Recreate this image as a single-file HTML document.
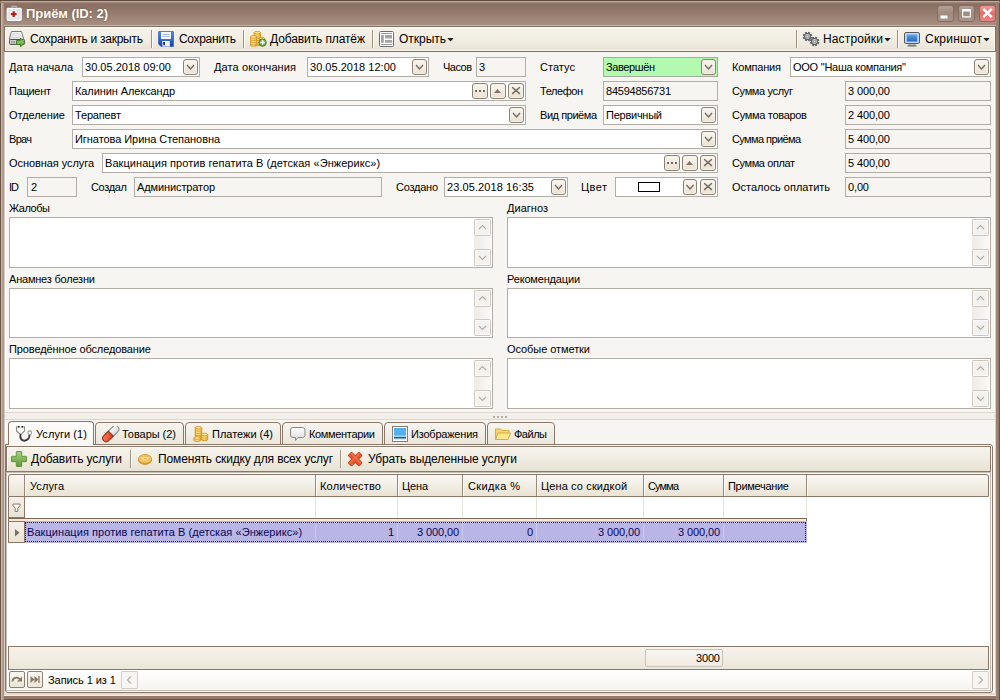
<!DOCTYPE html>
<html lang="ru"><head>
<meta charset="utf-8">
<title>Приём (ID: 2)</title>
<style>
*{box-sizing:border-box;margin:0;padding:0}
html,body{width:1000px;height:700px;overflow:hidden}
body{position:relative;background:#5e473b;font-family:"Liberation Sans",sans-serif;font-size:11px;color:#000}
.abs,.t,.in,.ro,.b,.ta,.sb,.tab,.ico,.sep,.hc,.vl{position:absolute}
/* window frame */
#frame{left:0;top:0;width:1000px;height:700px;background:#9a8171;border-radius:4px 4px 0 0}
#titlebar{left:0;top:0;width:1000px;height:25px;border-radius:4px 4px 0 0;background:linear-gradient(#5e473b 0,#5e473b 1px,#bfab9e 1px,#bfab9e 2px,#9b8476 2px,#998274 3px,#886e60 4px,#a68e80 100%)}
#titleline{left:2px;top:25px;width:996px;height:1px;background:#c8b4a8}
#lb{left:0;top:3px;width:4px;height:697px;background:linear-gradient(90deg,#6a5444 0,#6a5444 1px,#c8b4a8 1px,#c8b4a8 2px,#b89f92 2px,#b89f92 3px,#a6948a 3px,#a6948a 4px)}
#lb4{left:4px;top:52px;width:1px;height:641px;background:#d8d0c8}
#rb{left:996px;top:3px;width:4px;height:697px;background:linear-gradient(90deg,#9c8474 0,#9c8474 1px,#9a8070 1px,#9a8070 2px,#957a6c 2px,#957a6c 3px,#6e5248 3px,#6e5248 4px)}
#rb4{left:995px;top:52px;width:1px;height:641px;background:#d8cfc6}
#bb{left:0;top:693px;width:1000px;height:7px;background:linear-gradient(#e4dad0 0,#e4dad0 2px,#f8eee4 2px,#f8eee4 3px,#95796a 3px,#94786a 6px,#6a5044 6px,#6a5044 7px)}
#inner{left:5px;top:27px;width:990px;height:666px;background:#fffdf8}
#content{left:6px;top:52px;width:988px;height:641px;background:#f7f5f1}
.title{left:26px;top:6px;font-size:13px;font-weight:bold;color:#fffdf6;line-height:16px;white-space:nowrap;text-shadow:0 0 2px #6b5347}
.wb{position:absolute;top:5px;width:17px;height:17px;border:1px solid #846d60;border-radius:3px;background:linear-gradient(#b3a096,#a08b7f 50%,#a8948a)}
.wb.close{background:linear-gradient(#f09a98,#e06e6c 50%,#e88684);border-color:#a4605c}
/* toolbar */
.tb{left:4px;width:992px;border:1px solid #807064;box-shadow:inset 1px 1px 0 #fffdf8,inset -1px -1px 0 #fbf6ee;background:linear-gradient(#f6f3ec 0,#f2eee4 50%,#e9e3d4 100%)}
.t{white-space:nowrap;line-height:14px;height:14px}
.t12{font-size:12px}
.sep{width:1px;background:#a29284;box-shadow:1px 0 0 #fbfaf7}
/* inputs */
.in{height:20px;background:#fff;border:1px solid #b3ada7}
.ro{height:20px;background:#f7f5f1;border:1px solid #b3ada7}
.b{width:16px;height:16px;border:1px solid #8f8074;border-radius:3px;background:linear-gradient(#f8f5ee,#f1ece2 50%,#e9e3d5);box-shadow:inset 0 0 0 1px #f5f2ea}
.b svg{position:absolute;left:0;top:0}
.ta{background:#fff;border:1px solid #b3ada7}
.sb{width:17px;height:17px;border:1px solid #cdc7c0;background:#f4f2ee;border-radius:1.500px;box-shadow:inset 0 0 0 1px #faf9f7}
</style>
</head>
<body>
<div id="frame" class="abs"></div>
<div id="bb" class="abs"></div>
<div id="titlebar" class="abs"></div>
<div id="titleline" class="abs"></div>
<div id="inner" class="abs"></div>
<div id="content" class="abs"></div>
<div id="lb" class="abs"></div>
<div id="rb" class="abs"></div>
<div id="lb4" class="abs"></div>
<div id="rb4" class="abs"></div>

<!-- TITLE -->
<div class="abs title" style="letter-spacing: -0.05px;">Приём (ID: 2)</div>
<svg width="0" height="0" style="position:absolute"><defs><linearGradient id="gGold" x1="0" y1="0" x2="1" y2="0"><stop offset="0" stop-color="#f3c24c"></stop><stop offset=".45" stop-color="#ffe98c"></stop><stop offset="1" stop-color="#eeb640"></stop></linearGradient><linearGradient id="gGreen" x1="0" y1="0" x2="0" y2="1"><stop offset="0" stop-color="#a6d37c"></stop><stop offset="1" stop-color="#5d9a36"></stop></linearGradient><linearGradient id="gBlue" x1="0" y1="0" x2="0" y2="1"><stop offset="0" stop-color="#4a8be0"></stop><stop offset="1" stop-color="#1f3fb0"></stop></linearGradient><linearGradient id="gScr" x1="0" y1="0" x2="0" y2="1"><stop offset="0" stop-color="#5fa6ea"></stop><stop offset="1" stop-color="#2a62b8"></stop></linearGradient><linearGradient id="gRed" x1="0" y1="0" x2="1" y2="1"><stop offset="0" stop-color="#f88a5c"></stop><stop offset="1" stop-color="#d83a1c"></stop></linearGradient><linearGradient id="gGray" x1="0" y1="0" x2="0" y2="1"><stop offset="0" stop-color="#ffffff"></stop><stop offset="1" stop-color="#d8d8d8"></stop></linearGradient><radialGradient id="gPlus" cx=".5" cy=".4" r=".6"><stop offset="0" stop-color="#a4e070"></stop><stop offset="1" stop-color="#4a9a1c"></stop></radialGradient></defs></svg>
<svg class="ico" style="left:6px;top:5px" width="16" height="17" viewBox="0 0 16 17"><path d="M5.800 2.800v-1.500h4.700v1.500" fill="none" stroke="#b8b0aa" stroke-width="1.200"></path><rect x=".6" y="2.800" width="15.200" height="13.400" rx="1.200" fill="#6e5a4e" opacity=".55"></rect><rect x="1.200" y="3.400" width="14" height="12" rx=".8" fill="#e2e4e9" stroke="#fbfbfb" stroke-width="1.200"></rect><circle cx="7.700" cy="9.200" r="4" fill="#fff"></circle><path d="M7.700 6.300v5.800M4.800 9.200h5.800" stroke="#c81414" stroke-width="2.300"></path></svg>

<div class="wb" style="left:937px"><svg width="15" height="15" viewBox="0 0 15 15"><rect x="2.500" y="9.500" width="7" height="3" fill="#fff"></rect></svg></div>
<div class="wb" style="left:958px"><svg width="15" height="15" viewBox="0 0 15 15"><path d="M3 3h9v8.500h-9z M4.200 5.500h6.600v4.800h-6.600z" fill="#fff" fill-rule="evenodd"></path></svg></div>
<div class="wb close" style="left:979px"><svg width="15" height="15" viewBox="0 0 15 15"><path d="M3.300 2.800l8.400 8.400M11.700 2.800l-8.400 8.400" stroke="#fff" stroke-width="2.500" stroke-linecap="butt"></path></svg></div>

<!-- TOOLBAR 1 -->
<div class="abs tb" style="top:26px;height:26px"></div>
<svg class="ico" style="left:9px;top:31px" width="17" height="17" viewBox="0 0 17 17"><path d="M2.500 .5h10l2.500 8.500h-15z" fill="url(#gGray)" stroke="#7a7a7a"></path><ellipse cx="7.500" cy="4.500" rx="4" ry="2.200" fill="#ececec" stroke="#d2d2d2" stroke-width=".8"></ellipse><rect x=".5" y="8.500" width="15" height="5" rx="1" fill="#cfcfcf" stroke="#555"></rect><path d="M2.500 10v2.500M4 10v2.500M5.500 10v2.500" stroke="#8a8a8a" stroke-width=".8"></path><path d="M7.500 9.500h4v-2.500l4.300 4.500l-4.300 4.500v-2.500h-4z" fill="url(#gGreen)" stroke="#3f7a1f" stroke-width=".9" stroke-linejoin="round"></path></svg>
<div class="t t12" style="left: 30px; top: 32px; letter-spacing: -0.25px;">Сохранить и закрыть</div>
<div class="sep" style="left:151px;top:30px;height:18px"></div>
<svg class="ico" style="left:158px;top:31px" width="16" height="16" viewBox="0 0 16 16"><path d="M1 .5h14a.5 .5 0 0 1 .5 .5v14.500h-12.500l-2.500 -2.500v-12a.5 .5 0 0 1 .5 -.5z" fill="url(#gBlue)" stroke="#2a50b8" stroke-width=".6"></path><rect x="3" y="1" width="10" height="7" fill="#f4fbff"></rect><path d="M4.500 3.500h7M4.500 5.500h7" stroke="#9ab0e0" stroke-width=".8"></path><rect x="3" y="8.200" width="10" height="1.300" fill="#3a8ad0" opacity=".7"></rect><rect x="4.300" y="10" width="7.500" height="5.500" fill="#f4f6fa"></rect><rect x="5.200" y="11" width="1.800" height="3.200" fill="#1c2c50"></rect></svg>
<div class="t t12" style="left: 179px; top: 32px; letter-spacing: -0.33px;">Сохранить</div>
<div class="sep" style="left:243px;top:30px;height:18px"></div>
<svg class="ico" style="left:250px;top:31px" width="17" height="17" viewBox="0 0 17 17"><path d="M4.0 1.7v11.8a3.3 1.3 0 0 0 6.6 0v-11.8z" fill="url(#gGold)" stroke="#cd8a22" stroke-width=".8"></path><path d="M4.0 3.9000000000000004a3.3 1.3 0 0 0 6.6 0" fill="none" stroke="#d08e26" stroke-width=".7"></path><path d="M4.0 6.1000000000000005a3.3 1.3 0 0 0 6.6 0" fill="none" stroke="#d08e26" stroke-width=".7"></path><path d="M4.0 8.3a3.3 1.3 0 0 0 6.6 0" fill="none" stroke="#d08e26" stroke-width=".7"></path><path d="M4.0 10.5a3.3 1.3 0 0 0 6.6 0" fill="none" stroke="#d08e26" stroke-width=".7"></path><path d="M4.0 12.7a3.3 1.3 0 0 0 6.6 0" fill="none" stroke="#d08e26" stroke-width=".7"></path><ellipse cx="7.3" cy="1.7" rx="3.3" ry="1.3" fill="#ffea8c" stroke="#cd8a22" stroke-width=".8"></ellipse><path d="M9.4 7.5v3.5a2.6 1.3 0 0 0 5.2 0v-3.5z" fill="url(#gGold)" stroke="#cd8a22" stroke-width=".8"></path><path d="M9.4 9.7a2.6 1.3 0 0 0 5.2 0" fill="none" stroke="#d08e26" stroke-width=".7"></path><ellipse cx="12" cy="7.5" rx="2.6" ry="1.3" fill="#ffea8c" stroke="#cd8a22" stroke-width=".8"></ellipse><path d="M0.20000000000000018 6v8a3.3 1.3 0 0 0 6.6 0v-8z" fill="url(#gGold)" stroke="#cd8a22" stroke-width=".8"></path><path d="M0.20000000000000018 8.2a3.3 1.3 0 0 0 6.6 0" fill="none" stroke="#d08e26" stroke-width=".7"></path><path d="M0.20000000000000018 10.399999999999999a3.3 1.3 0 0 0 6.6 0" fill="none" stroke="#d08e26" stroke-width=".7"></path><path d="M0.20000000000000018 12.599999999999998a3.3 1.3 0 0 0 6.6 0" fill="none" stroke="#d08e26" stroke-width=".7"></path><ellipse cx="3.5" cy="6" rx="3.3" ry="1.3" fill="#ffea8c" stroke="#cd8a22" stroke-width=".8"></ellipse><circle cx="12.600" cy="11.600" r="3.700" fill="url(#gPlus)" stroke="#3d8a14" stroke-width=".9"></circle><path d="M12.600 9.300v4.600M10.300 11.600h4.600" stroke="#fff" stroke-width="1.300"></path></svg>
<div class="t t12" style="left: 270px; top: 32px; letter-spacing: -0.11px;">Добавить платёж</div>
<div class="sep" style="left:372px;top:30px;height:18px"></div>
<svg class="ico" style="left:379px;top:31px" width="15" height="16" viewBox="0 0 15 16"><rect x=".5" y=".5" width="14" height="15" rx="1" fill="#fff" stroke="#6c6c6c"></rect><path d="M2 2.500h11M2 13.500h11" stroke="#9a9a9a"></path><rect x="2" y="4" width="2.800" height="7.800" fill="#a4a4a4"></rect><rect x="6" y="4" width="7" height="3.500" fill="#a4a4a4"></rect><rect x="6" y="9" width="7" height="2.800" fill="#a4a4a4"></rect></svg>
<div class="t t12" style="left: 399px; top: 32px; letter-spacing: -0.02px;">Открыть</div>
<svg class="ico" style="left:447px;top:38px" width="7" height="4" viewBox="0 0 7 4"><path d="M.3 0h6.400l-3.200 3.400z" fill="#1a1a1a"></path></svg>
<div class="sep" style="left:796px;top:30px;height:18px"></div>
<svg class="ico" style="left:802px;top:31px" width="18" height="17" viewBox="0 0 18 17"><rect x="4.45" y="0.80" width="2.100" height="2.400" fill="#636363" transform="rotate(22.5 5.5 5.5)"></rect><rect x="4.45" y="0.80" width="2.100" height="2.400" fill="#636363" transform="rotate(67.5 5.5 5.5)"></rect><rect x="4.45" y="0.80" width="2.100" height="2.400" fill="#636363" transform="rotate(112.5 5.5 5.5)"></rect><rect x="4.45" y="0.80" width="2.100" height="2.400" fill="#636363" transform="rotate(157.5 5.5 5.5)"></rect><rect x="4.45" y="0.80" width="2.100" height="2.400" fill="#636363" transform="rotate(202.5 5.5 5.5)"></rect><rect x="4.45" y="0.80" width="2.100" height="2.400" fill="#636363" transform="rotate(247.5 5.5 5.5)"></rect><rect x="4.45" y="0.80" width="2.100" height="2.400" fill="#636363" transform="rotate(292.5 5.5 5.5)"></rect><rect x="4.45" y="0.80" width="2.100" height="2.400" fill="#636363" transform="rotate(337.5 5.5 5.5)"></rect><circle cx="5.5" cy="5.5" r="3.500" fill="#636363"></circle><circle cx="5.5" cy="5.5" r="2.400" fill="#dadae2"></circle><circle cx="5.5" cy="5.5" r="1.300" fill="none" stroke="#7a7a86" stroke-width=".8"></circle><rect x="11.55" y="5.80" width="2.100" height="2.400" fill="#636363" transform="rotate(22.5 12.6 10.5)"></rect><rect x="11.55" y="5.80" width="2.100" height="2.400" fill="#636363" transform="rotate(67.5 12.6 10.5)"></rect><rect x="11.55" y="5.80" width="2.100" height="2.400" fill="#636363" transform="rotate(112.5 12.6 10.5)"></rect><rect x="11.55" y="5.80" width="2.100" height="2.400" fill="#636363" transform="rotate(157.5 12.6 10.5)"></rect><rect x="11.55" y="5.80" width="2.100" height="2.400" fill="#636363" transform="rotate(202.5 12.6 10.5)"></rect><rect x="11.55" y="5.80" width="2.100" height="2.400" fill="#636363" transform="rotate(247.5 12.6 10.5)"></rect><rect x="11.55" y="5.80" width="2.100" height="2.400" fill="#636363" transform="rotate(292.5 12.6 10.5)"></rect><rect x="11.55" y="5.80" width="2.100" height="2.400" fill="#636363" transform="rotate(337.5 12.6 10.5)"></rect><circle cx="12.6" cy="10.5" r="3.500" fill="#636363"></circle><circle cx="12.6" cy="10.5" r="2.400" fill="#dadae2"></circle><circle cx="12.6" cy="10.5" r="1.300" fill="none" stroke="#7a7a86" stroke-width=".8"></circle></svg>
<div class="t t12" style="left: 823px; top: 32px; letter-spacing: 0.14px;">Настройки</div>
<svg class="ico" style="left:884px;top:38px" width="7" height="4" viewBox="0 0 7 4"><path d="M.3 0h6.400l-3.200 3.400z" fill="#1a1a1a"></path></svg>
<div class="sep" style="left:897px;top:30px;height:18px"></div>
<svg class="ico" style="left:904px;top:32px" width="16" height="15" viewBox="0 0 16 15"><rect x=".5" y=".5" width="15" height="11" rx="1.500" fill="#b9d8ff" stroke="#5a5a5a"></rect><rect x="2.800" y="2.500" width="10.400" height="7" fill="url(#gScr)"></rect><path d="M5.500 12h5l1 1.500h-7z" fill="#e0e0e0" stroke="#6a6a6a" stroke-width=".6"></path><rect x="3.500" y="13.200" width="9" height="1.300" rx=".5" fill="#707070"></rect></svg>
<div class="t t12" style="left: 925px; top: 32px; letter-spacing: 0.22px;">Скриншот</div>
<svg class="ico" style="left:983px;top:38px" width="7" height="4" viewBox="0 0 7 4"><path d="M.3 0h6.400l-3.200 3.400z" fill="#1a1a1a"></path></svg>


<!-- FORM -->
<div class="t" style="left: 9px; top: 60px; letter-spacing: 0.03px;">Дата начала</div>
<div class="in" style="left:82px;top:57px;width:118px;"></div>
<div class="t" style="left: 85px; top: 60px; letter-spacing: 0.02px;">30.05.2018 09:00</div>
<div class="b" style="left:183px;top:59px;width:15px;"><svg width="13" height="14" viewBox="0 0 13 14"><path d="M3 5l3.500 4l3.500 -4" fill="none" stroke="#75655a" stroke-width="1.250"></path></svg></div>
<div class="t" style="left: 214px; top: 60px; letter-spacing: 0.1px;">Дата окончания</div>
<div class="in" style="left:307px;top:57px;width:122px;"></div>
<div class="t" style="left: 310px; top: 60px; letter-spacing: 0.02px;">30.05.2018 12:00</div>
<div class="b" style="left:412px;top:59px;width:15px;"><svg width="13" height="14" viewBox="0 0 13 14"><path d="M3 5l3.500 4l3.500 -4" fill="none" stroke="#75655a" stroke-width="1.250"></path></svg></div>
<div class="t" style="left: 443px; top: 60px; letter-spacing: -0.51px;">Часов</div>
<div class="ro" style="left:476px;top:57px;width:50px;"></div>
<div class="t" style="left:479px;top:60px;">3</div>
<div class="t" style="left: 540px; top: 60px; letter-spacing: 0.04px;">Статус</div>
<div class="in" style="left:603px;top:57px;width:115px;background:#b3fab0;border-color:#a3ad9c;"></div>
<div class="t" style="left: 606px; top: 60px; letter-spacing: -0.39px;">Завершён</div>
<div class="b" style="left:701px;top:59px;width:15px;"><svg width="13" height="14" viewBox="0 0 13 14"><path d="M3 5l3.500 4l3.500 -4" fill="none" stroke="#75655a" stroke-width="1.250"></path></svg></div>
<div class="t" style="left: 732px; top: 60px; letter-spacing: -0.19px;">Компания</div>
<div class="in" style="left:790px;top:57px;width:201px;"></div>
<div class="t" style="left: 793px; top: 60px; letter-spacing: -0.25px;">ООО "Наша компания"</div>
<div class="b" style="left:974px;top:59px;width:15px;"><svg width="13" height="14" viewBox="0 0 13 14"><path d="M3 5l3.500 4l3.500 -4" fill="none" stroke="#75655a" stroke-width="1.250"></path></svg></div>
<div class="t" style="left: 9px; top: 84px; letter-spacing: -0.28px;">Пациент</div>
<div class="in" style="left:72px;top:81px;width:454px;"></div>
<div class="t" style="left: 75px; top: 84px; letter-spacing: -0.09px;">Калинин Александр</div>
<div class="b" style="left:472px;top:83px;"><svg width="14" height="14" viewBox="0 0 14 14"><path d="M2 7h2M6 7h2M10 7h2" stroke="#75655a" stroke-width="2"></path></svg></div>
<div class="b" style="left:490px;top:83px;"><svg width="14" height="14" viewBox="0 0 14 14"><path d="M3 9l3.500 -4l3.500 4z" fill="#8a7468"></path></svg></div>
<div class="b" style="left:508px;top:83px;"><svg width="14" height="14" viewBox="0 0 14 14"><path d="M3.200 3.300l7.600 6.600M10.800 3.300l-7.600 6.600" stroke="#75655a" stroke-width="1.400"></path></svg></div>
<div class="t" style="left: 540px; top: 84px; letter-spacing: -0.44px;">Телефон</div>
<div class="ro" style="left:603px;top:81px;width:115px;"></div>
<div class="t" style="left: 606px; top: 84px; letter-spacing: -0.23px;">84594856731</div>
<div class="t" style="left: 732px; top: 84px; letter-spacing: -0.34px;">Сумма услуг</div>
<div class="ro" style="left:845px;top:81px;width:146px;"></div>
<div class="t" style="left: 848px; top: 84px; letter-spacing: -0.12px;">3 000,00</div>
<div class="t" style="left: 9px; top: 108px; letter-spacing: -0.04px;">Отделение</div>
<div class="in" style="left:72px;top:105px;width:454px;"></div>
<div class="t" style="left: 75px; top: 108px; letter-spacing: -0.17px;">Терапевт</div>
<div class="b" style="left:509px;top:107px;width:15px;"><svg width="13" height="14" viewBox="0 0 13 14"><path d="M3 5l3.500 4l3.500 -4" fill="none" stroke="#75655a" stroke-width="1.250"></path></svg></div>
<div class="t" style="left: 540px; top: 108px; letter-spacing: -0.44px;">Вид приёма</div>
<div class="in" style="left:603px;top:105px;width:115px;"></div>
<div class="t" style="left: 606px; top: 108px; letter-spacing: -0.25px;">Первичный</div>
<div class="b" style="left:701px;top:107px;width:15px;"><svg width="13" height="14" viewBox="0 0 13 14"><path d="M3 5l3.500 4l3.500 -4" fill="none" stroke="#75655a" stroke-width="1.250"></path></svg></div>
<div class="t" style="left: 732px; top: 108px; letter-spacing: -0.3px;">Сумма товаров</div>
<div class="ro" style="left:845px;top:105px;width:146px;"></div>
<div class="t" style="left: 848px; top: 108px; letter-spacing: -0.12px;">2 400,00</div>
<div class="t" style="left: 9px; top: 132px; letter-spacing: -0.69px;">Врач</div>
<div class="in" style="left:72px;top:129px;width:646px;"></div>
<div class="t" style="left: 75px; top: 132px; letter-spacing: -0.06px;">Игнатова Ирина Степановна</div>
<div class="b" style="left:701px;top:131px;width:15px;"><svg width="13" height="14" viewBox="0 0 13 14"><path d="M3 5l3.500 4l3.500 -4" fill="none" stroke="#75655a" stroke-width="1.250"></path></svg></div>
<div class="t" style="left: 732px; top: 132px; letter-spacing: -0.6px;">Сумма приёма</div>
<div class="ro" style="left:845px;top:129px;width:146px;"></div>
<div class="t" style="left: 848px; top: 132px; letter-spacing: -0.12px;">5 400,00</div>
<div class="t" style="left: 9px; top: 156px; letter-spacing: -0.07px;">Основная услуга</div>
<div class="in" style="left:102px;top:153px;width:616px;"></div>
<div class="t" style="left: 105px; top: 156px; letter-spacing: 0.06px;">Вакцинация против гепатита В (детская «Энжерикс»)</div>
<div class="b" style="left:664px;top:155px;"><svg width="14" height="14" viewBox="0 0 14 14"><path d="M2 7h2M6 7h2M10 7h2" stroke="#75655a" stroke-width="2"></path></svg></div>
<div class="b" style="left:682px;top:155px;"><svg width="14" height="14" viewBox="0 0 14 14"><path d="M3 9l3.500 -4l3.500 4z" fill="#8a7468"></path></svg></div>
<div class="b" style="left:700px;top:155px;"><svg width="14" height="14" viewBox="0 0 14 14"><path d="M3.200 3.300l7.600 6.600M10.800 3.300l-7.600 6.600" stroke="#75655a" stroke-width="1.400"></path></svg></div>
<div class="t" style="left: 732px; top: 156px; letter-spacing: -0.4px;">Сумма оплат</div>
<div class="ro" style="left:845px;top:153px;width:146px;"></div>
<div class="t" style="left: 848px; top: 156px; letter-spacing: -0.12px;">5 400,00</div>
<div class="t" style="left: 9px; top: 180px; letter-spacing: -1px;">ID</div>
<div class="ro" style="left:27px;top:177px;width:50px;"></div>
<div class="t" style="left:31px;top:180px;">2</div>
<div class="t" style="left: 91px; top: 180px; letter-spacing: -0.34px;">Создал</div>
<div class="ro" style="left:134px;top:177px;width:248px;"></div>
<div class="t" style="left: 137px; top: 180px; letter-spacing: -0.11px;">Администратор</div>
<div class="t" style="left: 396px; top: 180px; letter-spacing: -0.24px;">Создано</div>
<div class="in" style="left:444px;top:177px;width:124px;"></div>
<div class="t" style="left: 447px; top: 180px; letter-spacing: 0.09px;">23.05.2018 16:35</div>
<div class="b" style="left:551px;top:179px;width:15px;"><svg width="13" height="14" viewBox="0 0 13 14"><path d="M3 5l3.500 4l3.500 -4" fill="none" stroke="#75655a" stroke-width="1.250"></path></svg></div>
<div class="t" style="left: 581px; top: 180px; letter-spacing: 0.45px;">Цвет</div>
<div class="in" style="left:615px;top:177px;width:103px;"></div>
<div class="abs" style="left:638px;top:182px;width:22px;height:10px;border:1px solid #000;background:#fff"></div>
<div class="b" style="left:683px;top:179px;width:14px;"><svg width="12" height="14" viewBox="0 0 12 14"><path d="M2.500 5l3.500 4l3.500 -4" fill="none" stroke="#75655a" stroke-width="1.250"></path></svg></div>
<div class="b" style="left:700px;top:179px;"><svg width="14" height="14" viewBox="0 0 14 14"><path d="M3.200 3.300l7.600 6.600M10.800 3.300l-7.600 6.600" stroke="#75655a" stroke-width="1.400"></path></svg></div>
<div class="t" style="left: 732px; top: 180px; letter-spacing: -0.02px;">Осталось оплатить</div>
<div class="ro" style="left:845px;top:177px;width:146px;"></div>
<div class="t" style="left: 848px; top: 180px; letter-spacing: -0.14px;">0,00</div>


<!-- TEXTAREAS -->
<div class="t" style="left: 9px; top: 201px; letter-spacing: -0.45px;">Жалобы</div>
<div class="ta" style="left:9px;top:217px;width:484px;height:51px"></div>
<div class="abs" style="left:474px;top:219px;width:17px;height:47px;background:linear-gradient(90deg,#eeebe6,#faf9f7)"></div>
<div class="sb" style="left:474px;top:219px"><svg width="15" height="15" viewBox="0 0 15 15"><path d="M4 9l3.500 -3.500l3.500 3.500" fill="none" stroke="#b4aca4" stroke-width="1.100"></path></svg></div>
<div class="sb" style="left:474px;top:249px"><svg width="15" height="15" viewBox="0 0 15 15"><path d="M4 6l3.500 3.500l3.500 -3.500" fill="none" stroke="#b4aca4" stroke-width="1.100"></path></svg></div>
<div class="t" style="left: 507px; top: 201px; letter-spacing: 0.03px;">Диагноз</div>
<div class="ta" style="left:507px;top:217px;width:484px;height:51px"></div>
<div class="abs" style="left:972px;top:219px;width:17px;height:47px;background:linear-gradient(90deg,#eeebe6,#faf9f7)"></div>
<div class="sb" style="left:972px;top:219px"><svg width="15" height="15" viewBox="0 0 15 15"><path d="M4 9l3.500 -3.500l3.500 3.500" fill="none" stroke="#b4aca4" stroke-width="1.100"></path></svg></div>
<div class="sb" style="left:972px;top:249px"><svg width="15" height="15" viewBox="0 0 15 15"><path d="M4 6l3.500 3.500l3.500 -3.500" fill="none" stroke="#b4aca4" stroke-width="1.100"></path></svg></div>
<div class="t" style="left: 9px; top: 272px; letter-spacing: -0.21px;">Анамнез болезни</div>
<div class="ta" style="left:9px;top:288px;width:484px;height:50px"></div>
<div class="abs" style="left:474px;top:290px;width:17px;height:46px;background:linear-gradient(90deg,#eeebe6,#faf9f7)"></div>
<div class="sb" style="left:474px;top:290px"><svg width="15" height="15" viewBox="0 0 15 15"><path d="M4 9l3.500 -3.500l3.500 3.500" fill="none" stroke="#b4aca4" stroke-width="1.100"></path></svg></div>
<div class="sb" style="left:474px;top:319px"><svg width="15" height="15" viewBox="0 0 15 15"><path d="M4 6l3.500 3.500l3.500 -3.500" fill="none" stroke="#b4aca4" stroke-width="1.100"></path></svg></div>
<div class="t" style="left: 507px; top: 272px; letter-spacing: -0.17px;">Рекомендации</div>
<div class="ta" style="left:507px;top:288px;width:484px;height:50px"></div>
<div class="abs" style="left:972px;top:290px;width:17px;height:46px;background:linear-gradient(90deg,#eeebe6,#faf9f7)"></div>
<div class="sb" style="left:972px;top:290px"><svg width="15" height="15" viewBox="0 0 15 15"><path d="M4 9l3.500 -3.500l3.500 3.500" fill="none" stroke="#b4aca4" stroke-width="1.100"></path></svg></div>
<div class="sb" style="left:972px;top:319px"><svg width="15" height="15" viewBox="0 0 15 15"><path d="M4 6l3.500 3.500l3.500 -3.500" fill="none" stroke="#b4aca4" stroke-width="1.100"></path></svg></div>
<div class="t" style="left: 9px; top: 342px; letter-spacing: -0.11px;">Проведённое обследование</div>
<div class="ta" style="left:9px;top:358px;width:484px;height:51px"></div>
<div class="abs" style="left:474px;top:360px;width:17px;height:47px;background:linear-gradient(90deg,#eeebe6,#faf9f7)"></div>
<div class="sb" style="left:474px;top:360px"><svg width="15" height="15" viewBox="0 0 15 15"><path d="M4 9l3.500 -3.500l3.500 3.500" fill="none" stroke="#b4aca4" stroke-width="1.100"></path></svg></div>
<div class="sb" style="left:474px;top:390px"><svg width="15" height="15" viewBox="0 0 15 15"><path d="M4 6l3.500 3.500l3.500 -3.500" fill="none" stroke="#b4aca4" stroke-width="1.100"></path></svg></div>
<div class="t" style="left: 507px; top: 342px; letter-spacing: -0.07px;">Особые отметки</div>
<div class="ta" style="left:507px;top:358px;width:484px;height:51px"></div>
<div class="abs" style="left:972px;top:360px;width:17px;height:47px;background:linear-gradient(90deg,#eeebe6,#faf9f7)"></div>
<div class="sb" style="left:972px;top:360px"><svg width="15" height="15" viewBox="0 0 15 15"><path d="M4 9l3.500 -3.500l3.500 3.500" fill="none" stroke="#b4aca4" stroke-width="1.100"></path></svg></div>
<div class="sb" style="left:972px;top:390px"><svg width="15" height="15" viewBox="0 0 15 15"><path d="M4 6l3.500 3.500l3.500 -3.500" fill="none" stroke="#b4aca4" stroke-width="1.100"></path></svg></div>


<!-- TABS -->
<div class="abs" style="left:5px;top:412px;width:990px;height:8px;background:#f3f0ea;border-top:1px solid #dcd6cf;border-bottom:1px solid #dcd6cf"></div>
<div class="abs" style="left:493px;top:416px;width:2px;height:2px;background:#b5aaa0"></div>
<div class="abs" style="left:497px;top:416px;width:2px;height:2px;background:#b5aaa0"></div>
<div class="abs" style="left:501px;top:416px;width:2px;height:2px;background:#b5aaa0"></div>
<div class="abs" style="left:505px;top:416px;width:2px;height:2px;background:#b5aaa0"></div>
<div class="abs" style="left:5px;top:444px;width:988px;height:249px;border:1px solid #8d7768;border-radius:0 3px 3px 3px;background:#fbfaf8"></div>
<div class="tab" style="left:8px;top:421px;width:86px;height:24px;border:1px solid #8d7768;border-bottom:none;border-radius:4px 4px 0 0;background:linear-gradient(#fdfcfa,#f8f7f4)"></div>
<div class="tab" style="left:95px;top:422px;width:89px;height:23px;border:1px solid #8d7768;border-radius:4px 4px 0 0;background:linear-gradient(#f7f5f0,#ebe6db)"></div>
<div class="tab" style="left:185px;top:422px;width:96px;height:23px;border:1px solid #8d7768;border-radius:4px 4px 0 0;background:linear-gradient(#f7f5f0,#ebe6db)"></div>
<div class="tab" style="left:282px;top:422px;width:101px;height:23px;border:1px solid #8d7768;border-radius:4px 4px 0 0;background:linear-gradient(#f7f5f0,#ebe6db)"></div>
<div class="tab" style="left:384px;top:422px;width:102px;height:23px;border:1px solid #8d7768;border-radius:4px 4px 0 0;background:linear-gradient(#f7f5f0,#ebe6db)"></div>
<div class="tab" style="left:487px;top:422px;width:68px;height:23px;border:1px solid #8d7768;border-radius:4px 4px 0 0;background:linear-gradient(#f7f5f0,#ebe6db)"></div>
<svg class="ico" style="left:15px;top:426px" width="17" height="16" viewBox="0 0 17 16"><path d="M3.300 .7h-1.800v4.300l3.900 3.200M8 .7h1.500v4.100l-3.300 3.400" fill="none" stroke="#8c8c8c" stroke-width="1.100" stroke-linejoin="round"></path><rect x="3.100" y="0" width="1.500" height="1.700" fill="#1c1c1c"></rect><rect x="6.500" y="0" width="1.500" height="1.700" fill="#1c1c1c"></rect><path d="M5.700 8c-1.300 3.800 .6 6.700 3.600 6.700c3.200 0 5.400 -2.700 5.300 -6.200" fill="none" stroke="#3a3a3a" stroke-width="1.900"></path><circle cx="14.800" cy="6.700" r="1.800" fill="#fff" stroke="#9a9a9a" stroke-width="1.100"></circle></svg>
<div class="t" style="left: 36px; top: 427px; letter-spacing: 0.07px;">Услуги (1)</div>
<svg class="ico" style="left:102px;top:426px" width="18" height="17" viewBox="0 0 18 17"><g transform="rotate(-45 8.800 7.700)"><path d="M8.800 4.200h6.500a3.500 3.500 0 0 1 0 7h-6.500z" fill="url(#gGray)" stroke="#888" stroke-width="1"></path><path d="M8.800 4.200h-6.500a3.500 3.500 0 0 0 0 7h6.500z" fill="url(#gRed)" stroke="#9e2014" stroke-width="1"></path></g></svg>
<div class="t" style="left: 122px; top: 427px; letter-spacing: -0.04px;">Товары (2)</div>
<svg class="ico" style="left:193px;top:426px" width="16" height="16" viewBox="0 0 16 16"><path d="M2.2 1.8v8.2a3.3 1.3 0 0 0 6.6 0v-8.2z" fill="url(#gGold)" stroke="#cd8a22" stroke-width=".8"></path><path d="M2.2 4.0a3.3 1.3 0 0 0 6.6 0" fill="none" stroke="#d08e26" stroke-width=".7"></path><path d="M2.2 6.2a3.3 1.3 0 0 0 6.6 0" fill="none" stroke="#d08e26" stroke-width=".7"></path><path d="M2.2 8.4a3.3 1.3 0 0 0 6.6 0" fill="none" stroke="#d08e26" stroke-width=".7"></path><ellipse cx="5.5" cy="1.8" rx="3.3" ry="1.3" fill="#ffea8c" stroke="#cd8a22" stroke-width=".8"></ellipse><path d="M8.3 8.5v5.0a3.2 1.3 0 0 0 6.4 0v-5.0z" fill="url(#gGold)" stroke="#cd8a22" stroke-width=".8"></path><path d="M8.3 10.7a3.2 1.3 0 0 0 6.4 0" fill="none" stroke="#d08e26" stroke-width=".7"></path><path d="M8.3 12.899999999999999a3.2 1.3 0 0 0 6.4 0" fill="none" stroke="#d08e26" stroke-width=".7"></path><ellipse cx="11.5" cy="8.5" rx="3.2" ry="1.3" fill="#ffea8c" stroke="#cd8a22" stroke-width=".8"></ellipse><path d="M0.9000000000000004 12v2.1999999999999993a3.3 1.3 0 0 0 6.6 0v-2.1999999999999993z" fill="url(#gGold)" stroke="#cd8a22" stroke-width=".8"></path><ellipse cx="4.2" cy="12" rx="3.3" ry="1.3" fill="#ffea8c" stroke="#cd8a22" stroke-width=".8"></ellipse></svg>
<div class="t" style="left: 212px; top: 427px; letter-spacing: -0.01px;">Платежи (4)</div>
<svg class="ico" style="left:290px;top:427px" width="16" height="15" viewBox="0 0 16 15"><path d="M3 .5h9.500a2.500 2.500 0 0 1 2.500 2.500v5a2.500 2.500 0 0 1 -2.500 2.500h-4.500l-2.500 3v-3h-2.500a2.500 2.500 0 0 1 -2.500 -2.500v-5a2.500 2.500 0 0 1 2.500 -2.500z" fill="url(#gGray)" stroke="#8e8780" stroke-width="1"></path></svg>
<div class="t" style="left: 309px; top: 427px; letter-spacing: -0.33px;">Комментарии</div>
<svg class="ico" style="left:392px;top:426px" width="16" height="16" viewBox="0 0 16 16"><rect x=".5" y=".5" width="15" height="15" fill="#fff" stroke="#8a7f78"></rect><rect x="2" y="2" width="12" height="9" fill="#56b0ee"></rect><rect x="2" y="9.500" width="12" height="1.500" fill="#9ad6f6"></rect><rect x="2" y="11" width="12" height="1.700" fill="#1d5c94"></rect><rect x="2" y="12.700" width="12" height="1.300" fill="#cfe8f8"></rect></svg>
<div class="t" style="left: 411px; top: 427px; letter-spacing: -0.21px;">Изображения</div>
<svg class="ico" style="left:495px;top:428px" width="16" height="12" viewBox="0 0 16 12"><path d="M.5 11.500v-10.500h5l1.500 1.500h7v2" fill="#f6d56a" stroke="#d4a63a" stroke-width=".9"></path><path d="M.5 11.500l2.500 -6.500h12.500l-2.500 6.500z" fill="#fbe88c" stroke="#d4a63a" stroke-width=".9" stroke-linejoin="round"></path></svg>
<div class="t" style="left: 514px; top: 427px; letter-spacing: -0.49px;">Файлы</div>
<div class="abs" style="left:6px;top:446px;width:985px;height:26px;border:1px solid #8d7768;background:linear-gradient(#f6f4ed 0,#f0ece2 50%,#e8e2d3 100%);box-shadow:inset 1px 1px 0 #fbfaf7"></div>
<svg class="ico" style="left:11px;top:451px" width="16" height="16" viewBox="0 0 16 16"><path d="M5.300 1.100a.6 .6 0 0 1 .6 -.6h4.200a.6 .6 0 0 1 .6 .6v4.200h4.200a.6 .6 0 0 1 .6 .6v4.200a.6 .6 0 0 1 -.6 .6h-4.200v4.200a.6 .6 0 0 1 -.6 .6h-4.200a.6 .6 0 0 1 -.6 -.6v-4.200h-4.200a.6 .6 0 0 1 -.6 -.6v-4.200a.6 .6 0 0 1 .6 -.6h4.200z" fill="url(#gGreen)" stroke="#5c9038" stroke-width=".9"></path></svg>
<div class="t t12" style="left: 31px; top: 452px; letter-spacing: -0.09px;">Добавить услуги</div>
<div class="sep" style="left:130px;top:450px;height:18px"></div>
<svg class="ico" style="left:138px;top:454px" width="14" height="11" viewBox="0 0 14 11"><ellipse cx="7" cy="5.900" rx="6.500" ry="4.500" fill="#e0a038" stroke="#cf8f2c" stroke-width=".9"></ellipse><ellipse cx="7" cy="4.900" rx="6.500" ry="4.400" fill="#f8cc66" stroke="#d4922e" stroke-width=".9"></ellipse><ellipse cx="7" cy="4.600" rx="4.300" ry="2.500" fill="#fbdc8c" stroke="#e6aa44" stroke-width=".7"></ellipse><path d="M5.300 5.300l1.700 -1.900l1.700 1.900z" fill="#eeb650"></path></svg>
<div class="t t12" style="left: 158px; top: 452px; letter-spacing: -0.14px;">Поменять скидку для всех услуг</div>
<div class="sep" style="left:340px;top:450px;height:18px"></div>
<svg class="ico" style="left:348px;top:452px" width="15" height="15" viewBox="0 0 15 15"><g transform="translate(7.200 7.100)"><g fill="#c8381c" stroke="#c8381c" stroke-width="1"><g transform="rotate(45)"><rect x="-7.500" y="-2.250" width="15" height="4.500" rx=".9"></rect></g><g transform="rotate(-45)"><rect x="-7.500" y="-2.250" width="15" height="4.500" rx=".9"></rect></g></g><g fill="#e6542e"><g transform="rotate(45)"><rect x="-7.500" y="-2.250" width="15" height="4.500" rx=".9"></rect></g><g transform="rotate(-45)"><rect x="-7.500" y="-2.250" width="15" height="4.500" rx=".9"></rect></g></g><g fill="#f07e58" opacity=".7"><g transform="rotate(45)"><rect x="-7" y="-1.800" width="14" height="1.600" rx=".6"></rect></g><g transform="rotate(-45)"><rect x="-7" y="-1.800" width="14" height="1.600" rx=".6"></rect></g></g></g></svg>
<div class="t t12" style="left: 368px; top: 452px; letter-spacing: -0.14px;">Убрать выделенные услуги</div>


<!-- GRID -->
<div class="abs" style="left:6px;top:472px;width:985px;height:219px;border:1px solid #c4bcb5;background:#fff"></div>
<div class="abs" style="left:8px;top:474px;width:981px;height:23px;border:1px solid #8d7768;border-radius:3px 3px 0 0;background:linear-gradient(#faf8f4,#f2eee5 50%,#e9e3d4)"></div>
<div class="vl" style="left:24px;top:475px;width:1px;height:21px;background:#9c8878;box-shadow:1px 0 0 #fdfcfa"></div>
<div class="vl" style="left:315px;top:475px;width:1px;height:21px;background:#9c8878;box-shadow:1px 0 0 #fdfcfa"></div>
<div class="vl" style="left:397px;top:475px;width:1px;height:21px;background:#9c8878;box-shadow:1px 0 0 #fdfcfa"></div>
<div class="vl" style="left:462px;top:475px;width:1px;height:21px;background:#9c8878;box-shadow:1px 0 0 #fdfcfa"></div>
<div class="vl" style="left:536px;top:475px;width:1px;height:21px;background:#9c8878;box-shadow:1px 0 0 #fdfcfa"></div>
<div class="vl" style="left:643px;top:475px;width:1px;height:21px;background:#9c8878;box-shadow:1px 0 0 #fdfcfa"></div>
<div class="vl" style="left:723px;top:475px;width:1px;height:21px;background:#9c8878;box-shadow:1px 0 0 #fdfcfa"></div>
<div class="vl" style="left:806px;top:475px;width:1px;height:21px;background:#9c8878;box-shadow:1px 0 0 #fdfcfa"></div>
<div class="t" style="left: 30px; top: 479px; letter-spacing: 0.09px;">Услуга</div>
<div class="t" style="left: 320px; top: 479px; letter-spacing: 0.21px;">Количество</div>
<div class="t" style="left: 402px; top: 479px; letter-spacing: -0.15px;">Цена</div>
<div class="t" style="left: 468px; top: 479px; letter-spacing: 0.38px;">Скидка %</div>
<div class="t" style="left: 541px; top: 479px; letter-spacing: 0.12px;">Цена со скидкой</div>
<div class="t" style="left: 648px; top: 479px; letter-spacing: -0.89px;">Сумма</div>
<div class="t" style="left: 728px; top: 479px; letter-spacing: -0.3px;">Примечание</div>
<div class="abs" style="left:8px;top:497px;width:17px;height:21px;border:1px solid #8d7768;border-top:none;background:linear-gradient(#f4f1ea,#e9e3d5)"></div>
<div class="vl" style="left:315px;top:497px;width:1px;height:21px;background:#e6e2dc"></div>
<div class="vl" style="left:397px;top:497px;width:1px;height:21px;background:#e6e2dc"></div>
<div class="vl" style="left:462px;top:497px;width:1px;height:21px;background:#e6e2dc"></div>
<div class="vl" style="left:536px;top:497px;width:1px;height:21px;background:#e6e2dc"></div>
<div class="vl" style="left:643px;top:497px;width:1px;height:21px;background:#e6e2dc"></div>
<div class="vl" style="left:723px;top:497px;width:1px;height:21px;background:#e6e2dc"></div>
<div class="vl" style="left:806px;top:497px;width:1px;height:21px;background:#e6e2dc"></div>
<svg class="ico" style="left:12px;top:503px" width="9" height="10" viewBox="0 0 9 10"><path d="M1 1h7v1.500l-2.200 2.700v3.300h-2.600v-3.300l-2.200 -2.700z" fill="#f8f6f1" stroke="#8a7a6c" stroke-width="1"></path></svg>
<div class="abs" style="left:8px;top:518px;width:799px;height:3px;background:#fbe6d2;border-top:1px solid #7d695b;border-left:1px solid #8d7768;border-right:1px solid #8d7768"></div>
<div class="abs" style="left:8px;top:521px;width:17px;height:22px;border:1px solid #8d7768;background:linear-gradient(#f4f1ea,#e9e3d5)"></div>
<svg class="ico" style="left:15px;top:529px" width="5" height="8" viewBox="0 0 5 8"><path d="M0 0l4.500 3.700l-4.500 3.700z" fill="#7d6e5e"></path></svg>
<div class="abs" style="left:25px;top:521px;width:782px;height:22px;background:#b9b5e4"></div>
<div class="vl" style="left:315px;top:521px;width:1px;height:22px;background:#cdc9ea"></div>
<div class="vl" style="left:397px;top:521px;width:1px;height:22px;background:#cdc9ea"></div>
<div class="vl" style="left:462px;top:521px;width:1px;height:22px;background:#cdc9ea"></div>
<div class="vl" style="left:536px;top:521px;width:1px;height:22px;background:#cdc9ea"></div>
<div class="vl" style="left:643px;top:521px;width:1px;height:22px;background:#cdc9ea"></div>
<div class="vl" style="left:723px;top:521px;width:1px;height:22px;background:#cdc9ea"></div>
<div class="abs" style="left:25px;top:522px;width:781px;height:20px;border:1px dotted #14143c"></div>
<div class="t" style="left: 27px; top: 525px; color: rgb(7, 7, 90); letter-spacing: 0.06px;">Вакцинация против гепатита В (детская «Энжерикс»)</div>
<div class="t r" style="right:606px;top:525px;color:#07075a;">1</div>
<div class="t r" style="right: 541px; top: 525px; color: rgb(7, 7, 90); letter-spacing: -0.12px; margin-right: 0.12px;">3 000,00</div>
<div class="t r" style="right:467px;top:525px;color:#07075a;">0</div>
<div class="t r" style="right: 360px; top: 525px; color: rgb(7, 7, 90); letter-spacing: -0.12px; margin-right: 0.12px;">3 000,00</div>
<div class="t r" style="right: 280px; top: 525px; color: rgb(7, 7, 90); letter-spacing: -0.12px; margin-right: 0.12px;">3 000,00</div>
<div class="abs" style="left:8px;top:670px;width:981px;height:20px;border:0 solid #c4bcb4;background:linear-gradient(#fff,#f6f4ef)"></div>
<div class="abs" style="left:8px;top:646px;width:981px;height:24px;background:linear-gradient(#f6f3ec,#ebe6d9);border:1px solid #8d7768"></div>
<div class="abs" style="left:645px;top:649px;width:78px;height:18px;border:1px solid #c9c1b8;border-radius:2px;background:linear-gradient(#f8f6f1,#efebe1)"></div>
<div class="t r" style="right: 280px; top: 651px; letter-spacing: -0.16px; margin-right: 0.16px;">3000</div>
<div class="abs" style="left:9px;top:671px;width:16px;height:17px;border:1px solid #8f8074;border-radius:2px;background:linear-gradient(#faf8f3,#ebe5d6)"><svg width="14" height="15" viewBox="0 0 14 15"><path d="M2.500 9.500c0 -4 5 -5 7.500 -2.200" fill="none" stroke="#8a7668" stroke-width="1.800"></path><path d="M7 9.500h5v-5z" fill="#8a7668"></path></svg></div>
<div class="abs" style="left:27px;top:671px;width:16px;height:17px;border:1px solid #8f8074;border-radius:2px;background:linear-gradient(#faf8f3,#ebe5d6)"><svg width="14" height="15" viewBox="0 0 14 15"><path d="M2.500 4l4 3.500l-4 3.500zM6.500 4l4 3.500l-4 3.500z" fill="#8a7668"></path><path d="M11 4v7" stroke="#8a7668" stroke-width="1.300"></path></svg></div>
<div class="t" style="left: 48px; top: 673px; letter-spacing: -0.06px;">Запись 1 из 1</div>
<div class="abs" style="left:121px;top:671px;width:17px;height:18px;border:1px solid #d4cdc6;border-radius:1px;background:#f7f6f3"><svg width="15" height="16" viewBox="0 0 15 16"><path d="M9 4.500l-3.500 3.500l3.500 3.500" fill="none" stroke="#b4aca4" stroke-width="1.100"></path></svg></div>
<div class="abs" style="left:972px;top:671px;width:17px;height:18px;border:1px solid #d4cdc6;border-radius:1px;background:#f7f6f3"><svg width="15" height="16" viewBox="0 0 15 16"><path d="M6 4.500l3.500 3.500l-3.500 3.500" fill="none" stroke="#b4aca4" stroke-width="1.100"></path></svg></div>




</body></html>
